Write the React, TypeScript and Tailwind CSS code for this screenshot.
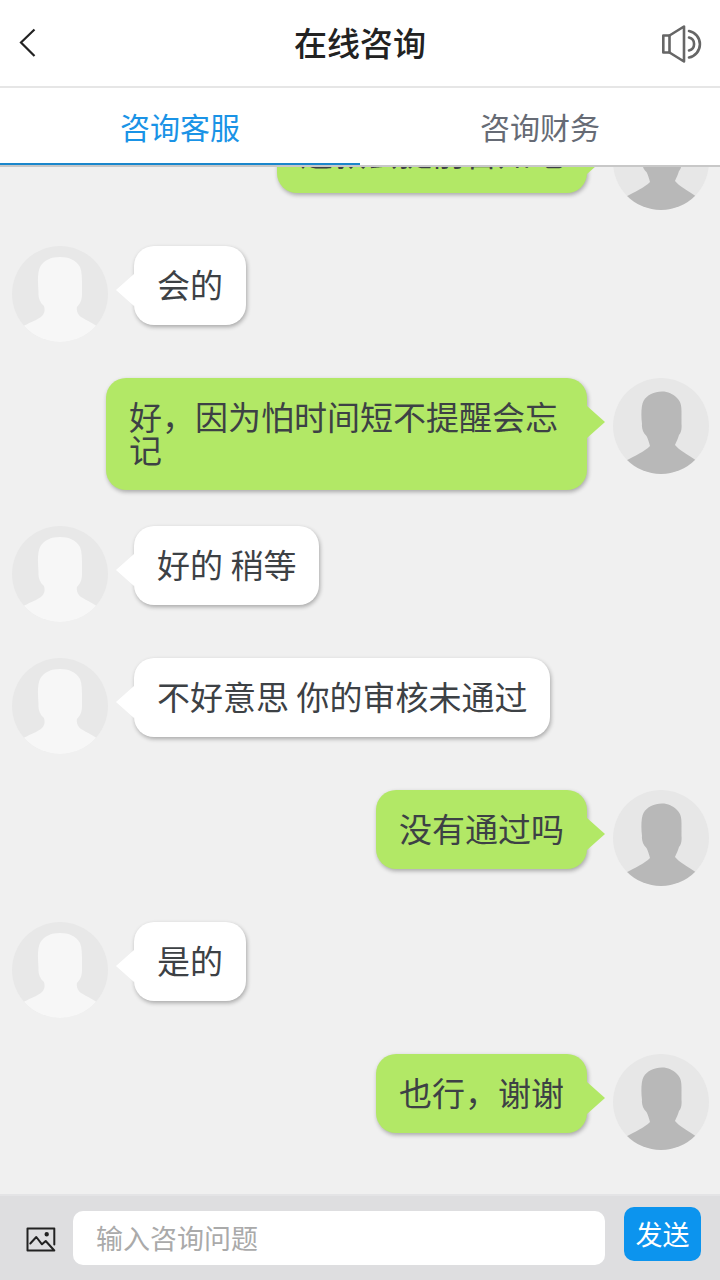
import { useState } from "react";
import type { FormEvent } from "react";

interface ChatMessage {
    id: number;
    text: string;
    isMine: boolean;
}

interface MessageRowProps {
    message: ChatMessage;
}

const initialMessages: ChatMessage[] = [
    { id: 1, text: "这款会提前告知吧", isMine: true },
    { id: 2, text: "会的", isMine: false },
    { id: 3, text: "好，因为怕时间短不提醒会忘记", isMine: true },
    { id: 4, text: "好的 稍等", isMine: false },
    { id: 5, text: "不好意思 你的审核未通过", isMine: false },
    { id: 6, text: "没有通过吗", isMine: true },
    { id: 7, text: "是的", isMine: false },
    { id: 8, text: "也行，谢谢", isMine: true },
];

const tabs = ["咨询客服", "咨询财务"];

function Avatar({ isMine }: { isMine: boolean }) {
    return (
        <svg
            viewBox="0 0 96 96"
            className={
                isMine
                    ? "size-24 shrink-0 rounded-full bg-[#e7e7e7] text-[#b8b8b8]"
                    : "size-24 shrink-0 rounded-full bg-[#e8e8e8] text-[#f7f7f7]"
            }
            aria-hidden="true"
        >
            {isMine ? (
                <path
                    fill="currentColor"
                    d="M49 13.500C55 13.500 60 16 64 20C68 24 68.500 28 68.500 34V46C69 51 68 55 66 57C65 61 63 64 62 67C66 72 74 76 84 83V98H12V83C22 78 32 73 37 68C36 64 35 61 33.500 58C30 55 28.500 50 29 46C28 38 28 28 30.500 23C34 17 41 13.500 49 13.500Z"
                />
            ) : (
                <path
                    fill="currentColor"
                    d="M48 11C57 11 64 14 68 21C70 26 70 33 70 40V48C70 54 68 58 65 61C64 65 66 69 69 71C74 74 79 76 86 81V98H10V81C16 77 26 74 30 70C33 67 33 63 32 60C28 57 26 51 26.500 46C26 38 25 28 28 21C32 14 39 11 48 11Z"
                />
            )}
        </svg>
    );
}

function MessageRow({ message }: MessageRowProps) {
    const { text, isMine } = message;

    return (
        <li
            className={
                isMine
                    ? "flex flex-row-reverse items-start gap-[26px]"
                    : "flex items-start gap-[26px]"
            }
        >
            <Avatar isMine={isMine} />
            <div
                className={
                    isMine
                        ? "relative max-w-[69%] rounded-[20px] bg-[#b2e866] px-[23px] pt-[22px] pb-6 shadow-[1px_2px_4px_rgba(0,0,0,0.3)]"
                        : "relative max-w-[69%] rounded-[20px] bg-white px-[23px] pt-[22px] pb-6 shadow-[1px_2px_4px_rgba(0,0,0,0.3)]"
                }
            >
                <span
                    className={
                        isMine
                            ? "absolute top-7 left-full border-y-16 border-l-18 border-y-transparent border-l-[#b2e866]"
                            : "absolute top-7 right-full border-y-16 border-r-18 border-y-transparent border-r-white"
                    }
                />
                <p className="text-[33px] leading-[33px] text-[#3d4145]">
                    {text}
                </p>
            </div>
        </li>
    );
}

export default function App() {
    const [messages, setMessages] = useState(initialMessages);
    const [activeTab, setActiveTab] = useState(tabs[0]);
    const [draft, setDraft] = useState("");

    const handleSend = (event: FormEvent) => {
        event.preventDefault();
        if (!draft.trim()) return;
        setMessages([
            ...messages,
            { id: messages.length + 1, text: draft, isMine: true },
        ]);
        setDraft("");
    };

    return (
        <div
            lang="zh-CN"
            className="flex h-screen flex-col bg-[#f0f0f0] font-['Noto_Sans_CJK_SC',sans-serif]"
        >
            <header className="flex h-22 shrink-0 items-center justify-between border-b-2 border-[#e6e6e6] bg-white px-4">
                <button aria-label="返回" className="w-12">
                    <svg
                        viewBox="0 0 24 32"
                        className="h-8 w-6 text-[#222222]"
                        fill="none"
                        stroke="currentColor"
                        strokeWidth="2.200"
                    >
                        <path d="M18.500 2.500L5 15.500L18.500 29" />
                    </svg>
                </button>
                <h1 className="pb-0.5 text-[33px] leading-10 font-medium text-[#222222]">
                    在线咨询
                </h1>
                <button aria-label="声音" className="flex w-12 justify-end">
                    <svg
                        viewBox="0 0 44 44"
                        className="size-11 text-[#666666]"
                        fill="none"
                        stroke="currentColor"
                        strokeWidth="2.600"
                        strokeLinejoin="round"
                        strokeLinecap="round"
                    >
                        <path d="M3.300 14.500H9.500V31.500H3.300Z" />
                        <path d="M9.500 14.500L24 5.500V40.500L9.500 31.500" />
                        <path d="M29 16.500A6.700 6.700 0 0 1 29 29.500" />
                        <path d="M29 10A13.500 13.500 0 0 1 29 36.500" />
                    </svg>
                </button>
            </header>

            <nav className="flex h-[79px] shrink-0 border-b-2 border-[#c8c8c8] bg-white">
                {tabs.map((tab) => (
                    <button
                        key={tab}
                        onClick={() => setActiveTab(tab)}
                        className={
                            tab === activeTab
                                ? "flex-1 border-b-2 border-[#1b87cc] pt-0.5 text-[30px] text-[#1a93e6]"
                                : "flex-1 border-b-2 border-transparent pt-0.5 text-[30px] text-[#666b75]"
                        }
                    >
                        {tab}
                    </button>
                ))}
            </nav>

            <main className="flex min-h-0 flex-1 flex-col-reverse overflow-y-auto [scrollbar-width:none]">
                <ul className="flex flex-col gap-9 pr-[11px] pb-11 pl-3">
                    {messages.map((message) => (
                        <MessageRow key={message.id} message={message} />
                    ))}
                </ul>
            </main>

            <form
                onSubmit={handleSend}
                className="flex h-[86px] shrink-0 items-center border-t-2 border-[#e4e4e6] bg-[#dedee0] pr-[19px] pl-6"
            >
                <button type="button" aria-label="发送图片" className="mr-4">
                    <svg
                        viewBox="0 0 33 33"
                        className="size-[33px] text-[#222222]"
                        fill="none"
                        stroke="currentColor"
                        strokeWidth="2"
                        strokeLinejoin="round"
                        strokeLinecap="round"
                    >
                        <path d="M30.300 22.500V6.500H3.500V28.500H30.300L21.700 19L18 22.300L12.300 15L6.300 21.500" />
                        <circle cx="22.700" cy="12.300" r="1.200" fill="currentColor" />
                    </svg>
                </button>
                <input
                    aria-label="输入咨询问题"
                    placeholder="输入咨询问题"
                    value={draft}
                    onChange={(event) => setDraft(event.target.value)}
                    className="h-[54px] min-w-0 flex-1 rounded-[10px] bg-white px-[23px] pb-0.5 text-[27px] text-[#3d4145] outline-none placeholder:text-[#aaaaaa]"
                />
                <button
                    type="submit"
                    className="mb-2 ml-[19px] h-[54px] w-[77px] rounded-[10px] bg-[#0c94ee] text-[27px] text-white"
                >
                    发送
                </button>
            </form>
        </div>
    );
}
